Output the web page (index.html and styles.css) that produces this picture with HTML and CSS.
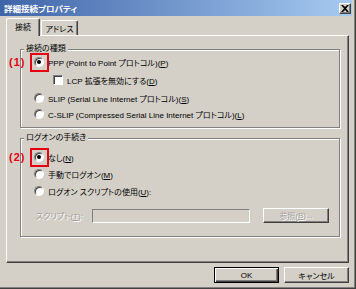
FILE: index.html
```html
<!DOCTYPE html>
<html lang="ja">
<head>
    <meta charset="UTF-8">
    <title>詳細接続プロパティ</title>
    <link rel="stylesheet" href="styles.css">
</head>
<body>
    <div class="window">
        <div class="titlebar">
            <span class="title">詳細接続プロパティ</span>
            <span class="close">
                <svg width="8" height="7" viewBox="0 0 8 7"><path d="M0 0h2l2 2 2-2h2L5 3.5 8 7H6L4 5 2 7H0l3-3.5z" fill="#000"/></svg>
            </span>
        </div>

        <div class="tabs">
            <div class="tab active">接続</div>
            <div class="tab">アドレス</div>
        </div>

        <div class="panel">
            <div class="group">
                <div class="group-title">接続の種類</div>
                <div class="row first">
                    <span class="mark-label">(1)</span>
                    <span class="mark-box"></span>
                    <span class="radio checked"></span>
                    <span class="text">PPP (Point to Point プロトコル)(<u>P</u>)</span>
                </div>
                <div class="row indent">
                    <span class="check"></span>
                    <span class="text">LCP 拡張を無効にする(<u>D</u>)</span>
                </div>
                <div class="row">
                    <span class="radio"></span>
                    <span class="text">SLIP (Serial Line Internet プロトコル)(<u>S</u>)</span>
                </div>
                <div class="row tight">
                    <span class="radio"></span>
                    <span class="text">C-SLIP (Compressed Serial Line Internet プロトコル)(<u>L</u>)</span>
                </div>
            </div>

            <div class="group second">
                <div class="group-title">ログオンの手続き</div>
                <div class="row first spaced">
                    <span class="mark-label">(2)</span>
                    <span class="mark-box"></span>
                    <span class="radio checked"></span>
                    <span class="text">なし(<u>N</u>)</span>
                </div>
                <div class="row snug">
                    <span class="radio"></span>
                    <span class="text">手動でログオン(<u>M</u>)</span>
                </div>
                <div class="row snug">
                    <span class="radio"></span>
                    <span class="text">ログオン スクリプトの使用(<u>U</u>):</span>
                </div>
                <div class="script-row">
                    <span class="disabled script-label">スクリプト(<u>T</u>):</span>
                    <span class="edit"></span>
                    <span class="btn browse disabled">参照(<u>B</u>)...</span>
                </div>
            </div>
        </div>

        <div class="buttons">
            <span class="btn default">OK</span>
            <span class="btn">キャンセル</span>
        </div>
    </div>
</body>
</html>
```

FILE: styles.css
```css
body {
    margin: 0;
    font-family: "Liberation Sans", "Noto Sans CJK JP", sans-serif;
    font-size: 8px;
    font-feature-settings: "palt";
    color: #000;
    background-color: #d4d0c8;
}
u {
    text-decoration: underline;
}
.window {
    width: 356px;
    height: 289px;
    box-sizing: border-box;
    padding-right: 3px;
    background-color: #d4d0c8;
    border-right: 1px solid #404040;
    border-bottom: 1px solid #404040;
    box-shadow: inset -1px -1px #808080;
}
.titlebar {
    height: 16px;
    display: flex;
    align-items: center;
    padding: 0 1px 0 4px;
    background: linear-gradient(to right, #3f65a9, #a6caf0);
    color: #fff;
    font-weight: bold;
    font-size: 8.5px;
}
.close {
    margin-left: auto;
    width: 12px;
    height: 11px;
    box-sizing: border-box;
    display: flex;
    align-items: center;
    justify-content: center;
    background-color: #d4d0c8;
    border: 1px solid;
    border-color: #fff #404040 #404040 #fff;
    box-shadow: inset -1px -1px #808080;
}
.tabs {
    display: flex;
    align-items: flex-end;
    height: 17px;
    margin: 2px 0 0 6px;
}
.tab {
    height: 15px;
    box-sizing: border-box;
    padding: 0 4px;
    display: flex;
    align-items: center;
    border: 1px solid;
    border-bottom: none;
    border-color: #fff #404040 #404040 #fff;
    border-radius: 2px 2px 0 0;
    box-shadow: inset -1px 0 #808080;
}
.tab.active {
    width: 34px;
    justify-content: center;
    height: 18px;
    margin-bottom: -1px;
    padding: 0 0 2px;
    position: relative;
    z-index: 1;
    background-color: #d4d0c8;
}
.tab + .tab {
    width: 37px;
    justify-content: center;
    margin-left: 1px;
    padding: 0;
}
.panel {
    width: 343px;
    height: 228px;
    box-sizing: border-box;
    margin-left: 6px;
    padding: 13px 8px 0 13px;
    border: 1px solid;
    border-color: #fff #404040 #404040 #fff;
    box-shadow: inset -1px -1px #808080;
}
.group {
    border: 1px solid #808080;
    box-shadow: inset 1px 1px #fff, 1px 1px #fff;
    padding: 0 0 6px 0;
}
.group.second {
    margin-top: 10px;
    padding-bottom: 13px;
}
.group-title {
    width: max-content;
    height: 12px;
    line-height: 12px;
    margin: -7px 0 0 3px;
    padding: 0 2px;
    background-color: #d4d0c8;
}
.row {
    position: relative;
    height: 14px;
    display: flex;
    align-items: center;
    margin-top: 4px;
    padding-left: 13px;
}
.row.first {
    margin-top: 0;
}
.row.spaced {
    margin-top: 6px;
}
.row.tight {
    margin-top: 2px;
}
.row.snug {
    margin-top: 3px;
}
.row.indent {
    padding-left: 32px;
}
.text {
    margin-left: 4px;
    white-space: nowrap;
}
.radio {
    position: relative;
    width: 10px;
    height: 10px;
    flex-shrink: 0;
    box-sizing: border-box;
    border-radius: 50%;
    background-color: #fff;
    border: 1px solid;
    border-color: #808080 #fff #fff #808080;
    box-shadow: inset 1px 1px #404040;
}
.radio.checked::after {
    content: '';
    position: absolute;
    left: 2px;
    top: 2px;
    width: 4px;
    height: 4px;
    border-radius: 50%;
    background-color: #000;
}
.check {
    width: 10px;
    height: 10px;
    flex-shrink: 0;
    box-sizing: border-box;
    background-color: #fff;
    border: 1px solid;
    border-color: #808080 #fff #fff #808080;
    box-shadow: inset 1px 1px #404040;
}
.mark-label {
    position: absolute;
    left: -12px;
    top: 2px;
    color: #e60012;
    font-weight: bold;
    font-size: 11px;
    letter-spacing: 1px;
    line-height: 11px;
}
.mark-box {
    position: absolute;
    left: 9px;
    top: -2px;
    width: 19px;
    height: 19px;
    box-sizing: border-box;
    border: 2px solid #e60012;
}
.script-row {
    display: flex;
    align-items: center;
    height: 15px;
    margin-top: 10px;
    padding-left: 15px;
}
.disabled {
    color: #a0a0a0;
    text-shadow: 1px 1px #fff;
}
.script-label {
    flex-shrink: 0;
    white-space: nowrap;
    margin-right: 9px;
}
.edit {
    width: 158px;
    height: 14px;
    flex-shrink: 0;
    box-sizing: border-box;
    border: 1px solid;
    border-color: #808080 #fff #fff #808080;
    background-color: #d4d0c8;
}
.btn {
    height: 15px;
    box-sizing: border-box;
    display: flex;
    align-items: center;
    justify-content: center;
    white-space: nowrap;
    border: 1px solid;
    border-color: #fff #404040 #404040 #fff;
    box-shadow: inset -1px -1px #808080;
}
.browse {
    width: 66px;
    margin-left: 13px;
}
.buttons {
    display: flex;
    justify-content: flex-end;
    gap: 5px;
    margin: 4px 3px 0 0;
}
.buttons .btn {
    width: 65px;
    height: 16px;
}
.btn.default {
    border: 1px solid #000;
    box-shadow: inset 1px 1px #fff, inset -1px -1px #404040, inset -2px -2px #808080;
}
```
